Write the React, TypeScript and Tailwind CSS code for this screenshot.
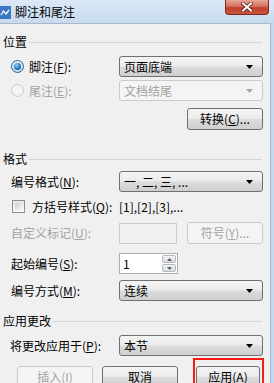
import React from 'react';

const font = { fontFamily: '"Noto Sans CJK SC", "Liberation Sans", sans-serif' };

function Arrow({ disabled }: { disabled?: boolean }) {
  return (
    <svg width="7" height="4" viewBox="0 0 7 4" className="shrink-0">
      <path d="M0 0 H7 L3.5 4 Z" fill={disabled ? '#a7a7a7' : '#000'} />
    </svg>
  );
}

function Combo({ text, disabled }: { text: string; disabled?: boolean }) {
  return (
    <div
      className={`flex h-[21px] w-[144px] items-center justify-between rounded-[3px] border pl-[4px] pr-[9px] ${
        disabled
          ? 'border-[#c8cbcd] bg-[#f4f4f4] text-[#a3a3a3]'
          : 'border-[#707070] bg-[linear-gradient(to_bottom,#f4f4f4,#ebebeb_48%,#dcdcdc_52%,#cfcfcf)] text-black'
      }`}
    >
      <span>{text}</span>
      <Arrow disabled={disabled} />
    </div>
  );
}

function Btn({ children, disabled, className = '' }: { children: React.ReactNode; disabled?: boolean; className?: string }) {
  return (
    <div
      className={`flex h-[22px] items-center justify-center rounded-[3px] border ${
        disabled
          ? 'border-[#c8cbcd] bg-[#f4f4f4] text-[#a3a3a3]'
          : 'border-[#707070] bg-[linear-gradient(to_bottom,#f4f4f4,#ebebeb_48%,#dcdcdc_52%,#cfcfcf)] text-black'
      } ${className}`}
    >
      {children}
    </div>
  );
}

function Section({ title }: { title: string }) {
  return (
    <div className="flex h-[16px] items-center pl-[3px]">
      <span>{title}</span>
      <div className="ml-[2px] mr-[8px] h-px flex-1 bg-[#d0d7dc]" />
    </div>
  );
}

function Row({ children, className = '' }: { children: React.ReactNode; className?: string }) {
  return <div className={`flex h-[21px] items-center ${className}`}>{children}</div>;
}

export default function App() {
  return (
    <div
      className="relative h-[383px] w-[274px] overflow-hidden bg-[#c4d8ee] text-[12px] leading-none text-black"
      style={font}
    >
      <div className="flex h-[23px] items-center bg-[linear-gradient(to_bottom,#dbe8f6,#c6daef)]">
        <svg width="11" height="13" viewBox="0 0 11 13" className="mt-[1px]">
          <rect x="0" y="0" width="11" height="13" fill="#3b78c4" />
          <path d="M1 9 L3.5 5 L6 8 L9 4" stroke="#fff" strokeWidth="1.3" fill="none" />
        </svg>
        <span className="ml-[4px] text-[12px] text-black">脚注和尾注</span>
        <div className="ml-auto mr-[5px] flex h-[15px] w-[44px] self-start items-center justify-center rounded-b-[4px] border border-t-0 border-[#7d2a22] bg-[linear-gradient(to_bottom,#e8a899,#d3705c_45%,#c2412c_55%,#c9553f)]">
          <svg width="12" height="10" viewBox="0 0 12 10">
            <path d="M2 1.5 L10 8.5 M10 1.5 L2 8.5" stroke="#5a1d16" strokeWidth="3.6" strokeLinecap="square" />
            <path d="M2 1.5 L10 8.5 M10 1.5 L2 8.5" stroke="#fff" strokeWidth="2" strokeLinecap="square" />
          </svg>
        </div>
      </div>

      <div className="mr-[3px] h-[360px] border-r border-t border-[#a9b8c8] bg-[#f0f0f0] pt-[10px]">
        <Section title="位置" />
        <Row className="mt-[6px]">
          <div className="ml-[11px] flex h-[13px] w-[13px] items-center justify-center rounded-full border border-[#2c628b] bg-[linear-gradient(to_bottom,#e6eef6,#c9d9e8)]">
            <div className="h-[7px] w-[7px] rounded-full bg-[radial-gradient(circle_at_40%_35%,#8fd1f7,#1c73bd_60%,#0f4c8a)]" />
          </div>
          <span className="ml-[5px] w-[90px]">
            脚注(<span className="underline">F</span>):
          </span>
          <Combo text="页面底端" />
        </Row>
        <Row className="mt-[3px] text-[#a3a3a3]">
          <div className="ml-[11px] h-[13px] w-[13px] rounded-full border border-[#c8cbcd] bg-[#f4f4f4]" />
          <span className="ml-[5px] w-[90px]">
            尾注(<span className="underline">E</span>):
          </span>
          <Combo text="文档结尾" disabled />
        </Row>
        <div className="mt-[7px] flex">
          <Btn className="ml-[187px] w-[76px]">
            转换(<span className="underline">C</span>)...
          </Btn>
        </div>

        <div className="mt-[21px]">
          <Section title="格式" />
        </div>
        <Row className="mt-[4px]">
          <span className="ml-[11px] w-[108px]">
            编号格式(<span className="underline">N</span>):
          </span>
          <Combo text="一, 二, 三, ..." />
        </Row>
        <Row className="mt-[4px]">
          <div className="ml-[12px] h-[13px] w-[13px] border border-[#8e8f8f] bg-[linear-gradient(to_bottom,#e6e6e6,#f8f8f8)] p-[2px]">
            <div className="h-full w-full bg-[linear-gradient(135deg,#cbcfd5,#f4f4f4)]" />
          </div>
          <span className="ml-[7px] w-[87px]">
            方括号样式(<span className="underline">Q</span>):
          </span>
          <span>[1],[2],[3],...</span>
        </Row>
        <Row className="mt-[5px] h-[22px] text-[#a3a3a3]">
          <span className="ml-[11px] w-[108px]">
            自定义标记(<span className="underline">U</span>):
          </span>
          <div className="h-[21px] w-[58px] border border-[#c8cbcd] bg-[#f0f0f0]" />
          <Btn disabled className="ml-[10px] w-[76px]">
            符号(<span className="underline">Y</span>)...
          </Btn>
        </Row>
        <Row className="mt-[9px]">
          <span className="ml-[11px] w-[108px]">
            起始编号(<span className="underline">S</span>):
          </span>
          <div className="flex h-[21px] w-[59px] items-center border border-[#abadb3] bg-white">
            <span className="ml-[3px] flex-1">1</span>
            <div className="mr-[1px] flex h-[17px] w-[14px] flex-col gap-px">
              <div className="flex flex-1 items-center justify-center rounded-[2px] border border-[#b5b8bd] bg-[linear-gradient(to_bottom,#f4f4f4,#dcdcdc)]">
                <svg width="5" height="3" viewBox="0 0 5 3">
                  <path d="M0 3 H5 L2.5 0 Z" fill="#4d6185" />
                </svg>
              </div>
              <div className="flex flex-1 items-center justify-center rounded-[2px] border border-[#b5b8bd] bg-[linear-gradient(to_bottom,#f4f4f4,#dcdcdc)]">
                <svg width="5" height="3" viewBox="0 0 5 3">
                  <path d="M0 0 H5 L2.5 3 Z" fill="#4d6185" />
                </svg>
              </div>
            </div>
          </div>
        </Row>
        <Row className="mt-[6px]">
          <span className="ml-[11px] w-[108px]">
            编号方式(<span className="underline">M</span>):
          </span>
          <Combo text="连续" />
        </Row>

        <div className="mt-[12px]">
          <Section title="应用更改" />
        </div>
        <Row className="mt-[6px]">
          <span className="ml-[10px] w-[109px]">
            将更改应用于(<span className="underline">P</span>):
          </span>
          <Combo text="本节" />
        </Row>
        <div className="mt-[10px] flex">
          <Btn disabled className="ml-[17px] w-[76px]">
            插入(<span className="underline">I</span>)
          </Btn>
          <Btn className="ml-[9px] w-[76px]">取消</Btn>
          <Btn className="ml-[18px] w-[64px] border-[#3c7fb1] bg-[linear-gradient(to_bottom,#eaf6fd,#d9f0fc_48%,#bee6fd_52%,#a7d9f5)]">
            应用(<span className="underline">A</span>)
          </Btn>
        </div>
      </div>

      <div className="absolute left-[193px] top-[358px] h-[30px] w-[71px] border-2 border-[#ff1a1a]" />
    </div>
  );
}
